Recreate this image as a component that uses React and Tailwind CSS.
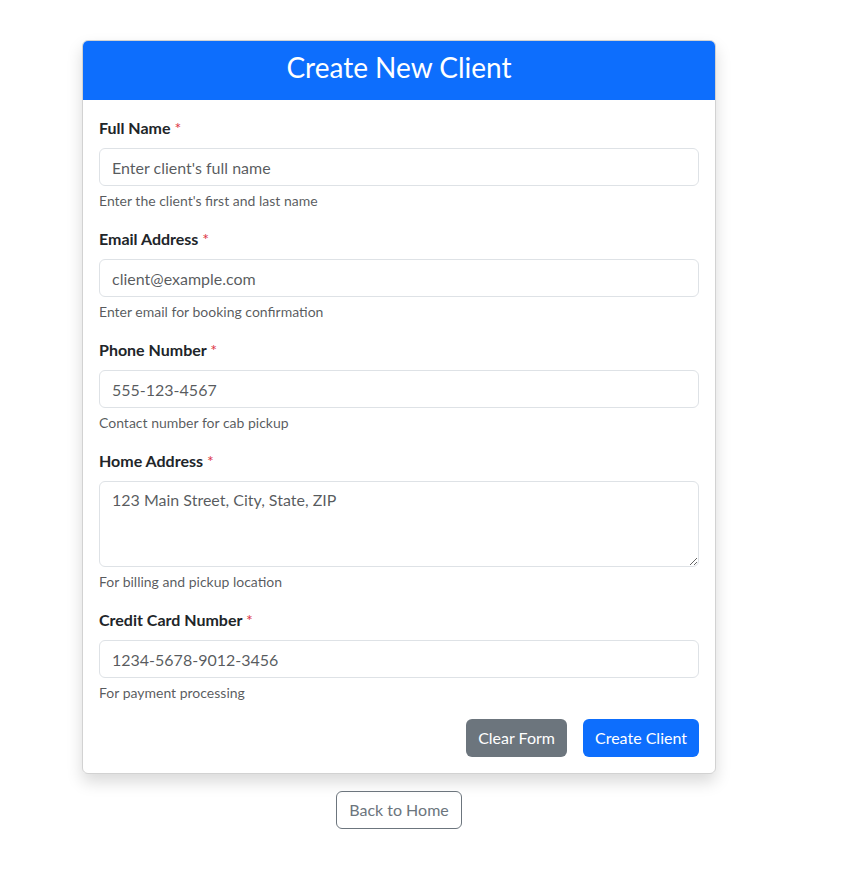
import { useState } from 'react';

const FIELDS = [
  { id: 'name', label: 'Full Name', placeholder: "Enter client's full name", help: "Enter the client's first and last name" },
  { id: 'email', label: 'Email Address', placeholder: 'client@example.com', help: 'Enter email for booking confirmation' },
  { id: 'phone', label: 'Phone Number', placeholder: '555-123-4567', help: 'Contact number for cab pickup' },
  { id: 'address', label: 'Home Address', placeholder: '123 Main Street, City, State, ZIP', help: 'For billing and pickup location', textarea: true },
  { id: 'card', label: 'Credit Card Number', placeholder: '1234-5678-9012-3456', help: 'For payment processing' },
];

const inputClass =
  'block w-full rounded-[6px] border border-[#dee2e6] bg-white px-3 py-[6px] text-base leading-6 text-[#212529] placeholder:text-[rgba(33,37,41,0.75)] outline-none';

export default function App() {
  const empty = Object.fromEntries(FIELDS.map((f) => [f.id, '']));
  const [values, setValues] = useState(empty);

  return (
    <div className="min-h-[893px] bg-white pt-[40px] font-['Lato',sans-serif] text-[#212529]">
      <div className="ml-[82px] w-[634px]">
        <div className="overflow-hidden rounded-[6px] border border-[rgba(0,0,0,0.175)] shadow-[0_8px_16px_rgba(0,0,0,0.15)]">
          <div className="h-[59px] bg-[#0d6efd] pt-[7px] text-center text-[28px] leading-[38px] text-white">
            Create New Client
          </div>
          <form className="p-4" onSubmit={(e) => e.preventDefault()}>
            {FIELDS.map((f) => (
              <div key={f.id} className="mb-4">
                <label htmlFor={f.id} className="mb-2 block h-6 text-base font-bold leading-6">
                  {f.label} <span className="font-normal leading-none text-[#dc3545]">*</span>
                </label>
                {f.textarea ? (
                  <textarea
                    id={f.id}
                    rows={3}
                    placeholder={f.placeholder}
                    value={values[f.id]}
                    onChange={(e) => setValues({ ...values, [f.id]: e.target.value })}
                    className={`${inputClass} h-[86px]`}
                  />
                ) : (
                  <input
                    id={f.id}
                    type="text"
                    placeholder={f.placeholder}
                    value={values[f.id]}
                    onChange={(e) => setValues({ ...values, [f.id]: e.target.value })}
                    className={`${inputClass} h-[38px]`}
                  />
                )}
                <div className="mt-1 h-[21px] text-sm leading-[21px] text-[rgba(33,37,41,0.75)]">{f.help}</div>
              </div>
            ))}
            <div className="flex justify-end gap-4">
              <button
                type="button"
                onClick={() => setValues(empty)}
                className="h-[38px] rounded-[6px] bg-[#6c757d] px-3 text-base text-white"
              >
                Clear Form
              </button>
              <button type="submit" className="h-[38px] rounded-[6px] bg-[#0d6efd] px-3 text-base text-white">
                Create Client
              </button>
            </div>
          </form>
        </div>
        <div className="mt-[17px] flex justify-center">
          <button
            type="button"
            className="h-[38px] rounded-[6px] border border-[#6c757d] px-3 text-base text-[#6c757d]"
          >
            Back to Home
          </button>
        </div>
      </div>
    </div>
  );
}
